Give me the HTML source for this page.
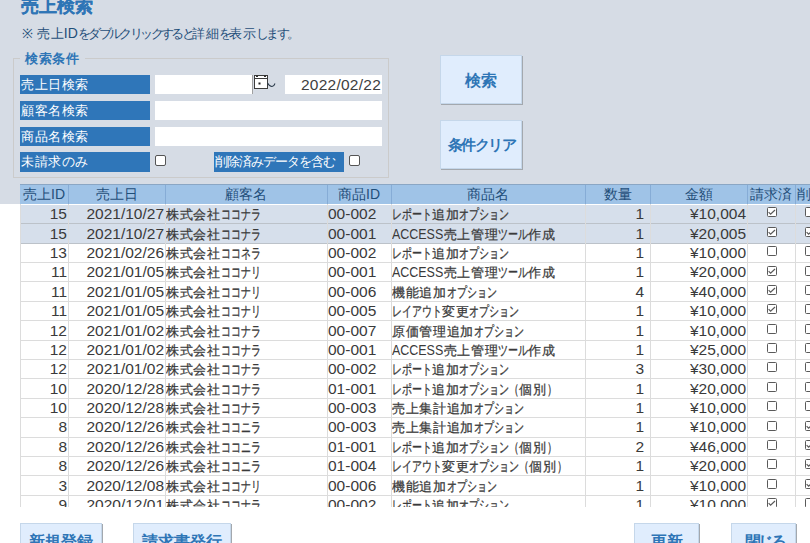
<!DOCTYPE html>
<html><head><meta charset="utf-8">
<style>
*{margin:0;padding:0;box-sizing:border-box}
html,body{width:810px;height:543px;overflow:hidden;background:#fff}
body{position:relative;font-family:"Liberation Sans",sans-serif;color:#404040}
.hdr{position:absolute;left:0;top:0;width:810px;height:204px;background:#D6DCE5}
.title{position:absolute;left:21px;top:-6px;font-size:18px;font-weight:bold;color:#2E75B6;white-space:nowrap;-webkit-text-stroke:0.12px #2E75B6}
.sub{position:absolute;left:22px;top:24px;font-size:13px;color:#1F4E79;white-space:nowrap}
.sub .k{letter-spacing:0.3px}
.sub .kt{letter-spacing:-2.6px}
.sub .l{font-size:14px}
.grp{position:absolute;left:13px;top:58px;width:376px;height:120px;border:1px solid #cbcbcb}
.legend{position:absolute;left:20px;top:50px;padding:0 6px 0 5px;background:#D6DCE5;font-size:13px;letter-spacing:0.5px;font-weight:bold;color:#2E75B6;white-space:nowrap}
.lbl{position:absolute;height:20px;background:#2F76B9;color:#fff;font-size:13px;letter-spacing:0.6px;line-height:20px;padding-left:1px;white-space:nowrap;overflow:hidden}
.tb{position:absolute;height:20px;background:#fff}
.cbx{position:absolute;width:11px;height:11px;border:1px solid #555;border-radius:2px;background:#fff}
.btn{position:absolute;background:#E0EDFD;color:#2E75B6;font-weight:bold;font-size:14px;text-align:center;white-space:nowrap;
  border:1px solid #c5d7ea;box-shadow:1px 1px 0 #a3a8ae}
.bb{height:40px;line-height:36px;font-size:15.5px}
.dsh{position:absolute;left:20px;width:790px;background:#9FC3E7;border-top:1px solid #8aa6c4}
.hc{position:absolute;top:184px;height:20px;line-height:20px;text-align:center;font-size:14px;color:#1F4E79;white-space:nowrap;overflow:hidden}
.row{position:absolute;left:20px;width:790px;height:19.39px;border-bottom:1px solid #dcdcdc;background:#fff}
.row.sel{background:#D6DFEB;border-bottom-color:#bcc2c9}
.c{position:absolute;height:19.39px;line-height:19px;font-size:15.5px;white-space:nowrap;overflow:hidden;padding:0 1px 0 1px;color:#3a3a3a}
.c.r{text-align:right}
.c.q{padding-right:6px}
.c .k{font-size:13px;letter-spacing:0.7px;-webkit-text-stroke:0.25px #3a3a3a}
.c .kt{display:inline-block;font-size:14px;white-space:nowrap}
.c .kt span{display:inline-block;transform:scaleX(0.714);transform-origin:0 50%;-webkit-text-stroke:0.3px #3a3a3a}
.c .l{font-size:12.5px}
.c .l2{display:inline-block;font-size:14px;white-space:nowrap}
.c .l2 span{display:inline-block;transform:scaleX(0.89);transform-origin:0 50%}
.vl{position:absolute;top:204px;height:303px;width:1px;background:#dcdcdc}
.vlh{position:absolute;top:185px;height:19px;width:1px;background:#86acd6}
.ds{position:absolute;left:0;top:0;width:810px;height:507px;overflow:hidden}
.cb{position:absolute;width:10px;height:10px;border:1px solid #5a5a5a;border-radius:1.5px;background:#fff}
.cb svg{position:absolute;left:-1px;top:-1px}
.ln{position:absolute;left:20px;top:204px;width:1px;height:303px;background:#dcdcdc}
</style></head><body>
<div class="hdr"></div>
<div class="title">売上検索</div>
<div class="sub"><span class="k">※</span><span class="l"> </span><span class="k">売上</span><span class="l">ID</span><span class="kt">をダブルクリックすると</span><span class="k">詳細</span><span class="kt">を</span><span class="k">表示</span><span class="kt">します。</span></div>
<div class="grp"></div>
<div class="legend">検索条件</div>

<div class="lbl" style="left:20px;top:75px;width:130px;height:19px">売上日検索</div>
<div class="lbl" style="left:20px;top:101px;width:130px;height:19px">顧客名検索</div>
<div class="lbl" style="left:20px;top:127px;width:130px;height:19px">商品名検索</div>
<div class="lbl" style="left:20px;top:152px;width:130px">未請求のみ</div>
<div class="lbl" style="left:214px;top:152px;width:130px;letter-spacing:-1px">削除済みデータを含む</div>

<div class="tb" style="left:155px;top:75px;width:98px;height:19px;border-right:1px solid #a0a0a0"></div>
<div class="tb" style="left:285px;top:75px;width:97px;height:19px;font-size:15.5px;letter-spacing:0.25px;line-height:20px;text-align:right;padding-right:1px;color:#404040">2022/02/22</div>
<div class="tb" style="left:155px;top:101px;width:227px;height:19px"></div>
<div class="tb" style="left:155px;top:127px;width:227px;height:19px"></div>
<svg style="position:absolute;left:254px;top:75px" width="22" height="15" viewBox="0 0 22 15">
 <rect x="0.5" y="0.5" width="13" height="13" fill="#fff" stroke="#3c3c3c" stroke-width="1"/>
 <line x1="0.5" y1="3.5" x2="13.5" y2="3.5" stroke="#3c3c3c"/>
 <rect x="2" y="0" width="2" height="2" fill="#333"/>
 <rect x="10" y="0" width="2" height="2" fill="#333"/>
 <rect x="4.5" y="7.5" width="2" height="2" fill="#222"/>
 <path d="M13.5 8 Q15.5 11.5 18 11.5 Q20 11.3 21 8.5" fill="none" stroke="#2b3a4a" stroke-width="1.1"/>
</svg>
<div class="cbx" style="left:155px;top:155px"></div>
<div class="cbx" style="left:349px;top:155px"></div>

<div class="btn" style="left:440px;top:55px;width:82px;height:49px;line-height:49px;font-size:15.5px">検索</div>
<div class="btn" style="left:440px;top:120px;width:82px;height:49px;line-height:47px;font-size:15px;letter-spacing:-1.6px;padding-left:1px">条件クリア</div>

<div class="ds">
<div class="dsh" style="top:184px;height:20px"></div>
<div class="hc" style="left:20.0px;width:48.0px">売上ID</div>
<div class="hc" style="left:68.0px;width:97.0px">売上日</div>
<div class="hc" style="left:165.0px;width:162.0px">顧客名</div>
<div class="hc" style="left:327.0px;width:64.0px">商品ID</div>
<div class="hc" style="left:391.0px;width:194.0px">商品名</div>
<div class="hc" style="left:585.0px;width:65.0px">数量</div>
<div class="hc" style="left:650.0px;width:97.0px">金額</div>
<div class="hc" style="left:747.0px;width:48.0px">請求済</div>
<div class="hc" style="left:795.0px;width:65.0px;text-align:left;padding-left:2px">削除済</div>
<div class="row sel" style="top:204.90px"></div>
<div class="c r" style="left:20.0px;width:48.0px;top:204.20px">15</div>
<div class="c r" style="left:68.0px;width:97.0px;top:204.20px">2021/10/27</div>
<div class="c jc" style="left:165.0px;width:162.0px;top:204.20px"><span class="k">株式会社</span><span class="kt" style="width:40.0px"><span>ココナラ</span></span></div>
<div class="c" style="left:327.0px;width:64.0px;top:204.20px">00-002</div>
<div class="c jc" style="left:391.0px;width:194.0px;top:204.20px"><span class="kt" style="width:40.0px"><span>レポート</span></span><span class="k">追加</span><span class="kt" style="width:50.0px"><span>オプション</span></span></div>
<div class="c r q" style="left:585.0px;width:65.0px;top:204.20px">1</div>
<div class="c r" style="left:650.0px;width:97.0px;top:204.20px">¥10,004</div>
<div class="cb" style="left:767.0px;top:207.3px"><svg width="10" height="10" viewBox="0 0 10 10"><path d="M1.6 5.2 L3.6 7.2 L8 3" fill="none" stroke="#5a5a5a" stroke-width="1.2"/></svg></div>
<div class="cb" style="left:805.0px;top:207.3px"></div>
<div class="row sel" style="top:224.29px"></div>
<div class="c r" style="left:20.0px;width:48.0px;top:223.59px">15</div>
<div class="c r" style="left:68.0px;width:97.0px;top:223.59px">2021/10/27</div>
<div class="c jc" style="left:165.0px;width:162.0px;top:223.59px"><span class="k">株式会社</span><span class="kt" style="width:40.0px"><span>ココナラ</span></span></div>
<div class="c" style="left:327.0px;width:64.0px;top:223.59px">00-001</div>
<div class="c jc" style="left:391.0px;width:194.0px;top:223.59px"><span class="l2" style="width:51.5px"><span>ACCESS</span></span><span class="k">売上管理</span><span class="kt" style="width:30.0px"><span>ツール</span></span><span class="k">作成</span></div>
<div class="c r q" style="left:585.0px;width:65.0px;top:223.59px">1</div>
<div class="c r" style="left:650.0px;width:97.0px;top:223.59px">¥20,005</div>
<div class="cb" style="left:767.0px;top:226.7px"><svg width="10" height="10" viewBox="0 0 10 10"><path d="M1.6 5.2 L3.6 7.2 L8 3" fill="none" stroke="#5a5a5a" stroke-width="1.2"/></svg></div>
<div class="cb" style="left:805.0px;top:226.7px"><svg width="10" height="10" viewBox="0 0 10 10"><path d="M1.6 5.2 L3.6 7.2 L8 3" fill="none" stroke="#5a5a5a" stroke-width="1.2"/></svg></div>
<div class="row" style="top:243.68px"></div>
<div class="c r" style="left:20.0px;width:48.0px;top:242.98px">13</div>
<div class="c r" style="left:68.0px;width:97.0px;top:242.98px">2021/02/26</div>
<div class="c jc" style="left:165.0px;width:162.0px;top:242.98px"><span class="k">株式会社</span><span class="kt" style="width:40.0px"><span>ココネラ</span></span></div>
<div class="c" style="left:327.0px;width:64.0px;top:242.98px">00-002</div>
<div class="c jc" style="left:391.0px;width:194.0px;top:242.98px"><span class="kt" style="width:40.0px"><span>レポート</span></span><span class="k">追加</span><span class="kt" style="width:50.0px"><span>オプション</span></span></div>
<div class="c r q" style="left:585.0px;width:65.0px;top:242.98px">1</div>
<div class="c r" style="left:650.0px;width:97.0px;top:242.98px">¥10,000</div>
<div class="cb" style="left:767.0px;top:246.1px"></div>
<div class="cb" style="left:805.0px;top:246.1px"></div>
<div class="row" style="top:263.07px"></div>
<div class="c r" style="left:20.0px;width:48.0px;top:262.37px">11</div>
<div class="c r" style="left:68.0px;width:97.0px;top:262.37px">2021/01/05</div>
<div class="c jc" style="left:165.0px;width:162.0px;top:262.37px"><span class="k">株式会社</span><span class="kt" style="width:40.0px"><span>ココナリ</span></span></div>
<div class="c" style="left:327.0px;width:64.0px;top:262.37px">00-001</div>
<div class="c jc" style="left:391.0px;width:194.0px;top:262.37px"><span class="l2" style="width:51.5px"><span>ACCESS</span></span><span class="k">売上管理</span><span class="kt" style="width:30.0px"><span>ツール</span></span><span class="k">作成</span></div>
<div class="c r q" style="left:585.0px;width:65.0px;top:262.37px">1</div>
<div class="c r" style="left:650.0px;width:97.0px;top:262.37px">¥20,000</div>
<div class="cb" style="left:767.0px;top:265.5px"><svg width="10" height="10" viewBox="0 0 10 10"><path d="M1.6 5.2 L3.6 7.2 L8 3" fill="none" stroke="#5a5a5a" stroke-width="1.2"/></svg></div>
<div class="cb" style="left:805.0px;top:265.5px"></div>
<div class="row" style="top:282.46px"></div>
<div class="c r" style="left:20.0px;width:48.0px;top:281.76px">11</div>
<div class="c r" style="left:68.0px;width:97.0px;top:281.76px">2021/01/05</div>
<div class="c jc" style="left:165.0px;width:162.0px;top:281.76px"><span class="k">株式会社</span><span class="kt" style="width:40.0px"><span>ココナリ</span></span></div>
<div class="c" style="left:327.0px;width:64.0px;top:281.76px">00-006</div>
<div class="c jc" style="left:391.0px;width:194.0px;top:281.76px"><span class="k">機能追加</span><span class="kt" style="width:50.0px"><span>オプション</span></span></div>
<div class="c r q" style="left:585.0px;width:65.0px;top:281.76px">4</div>
<div class="c r" style="left:650.0px;width:97.0px;top:281.76px">¥40,000</div>
<div class="cb" style="left:767.0px;top:284.9px"><svg width="10" height="10" viewBox="0 0 10 10"><path d="M1.6 5.2 L3.6 7.2 L8 3" fill="none" stroke="#5a5a5a" stroke-width="1.2"/></svg></div>
<div class="cb" style="left:805.0px;top:284.9px"></div>
<div class="row" style="top:301.85px"></div>
<div class="c r" style="left:20.0px;width:48.0px;top:301.15px">11</div>
<div class="c r" style="left:68.0px;width:97.0px;top:301.15px">2021/01/05</div>
<div class="c jc" style="left:165.0px;width:162.0px;top:301.15px"><span class="k">株式会社</span><span class="kt" style="width:40.0px"><span>ココナリ</span></span></div>
<div class="c" style="left:327.0px;width:64.0px;top:301.15px">00-005</div>
<div class="c jc" style="left:391.0px;width:194.0px;top:301.15px"><span class="kt" style="width:50.0px"><span>レイアウト</span></span><span class="k">変更</span><span class="kt" style="width:50.0px"><span>オプション</span></span></div>
<div class="c r q" style="left:585.0px;width:65.0px;top:301.15px">1</div>
<div class="c r" style="left:650.0px;width:97.0px;top:301.15px">¥10,000</div>
<div class="cb" style="left:767.0px;top:304.2px"><svg width="10" height="10" viewBox="0 0 10 10"><path d="M1.6 5.2 L3.6 7.2 L8 3" fill="none" stroke="#5a5a5a" stroke-width="1.2"/></svg></div>
<div class="cb" style="left:805.0px;top:304.2px"></div>
<div class="row" style="top:321.24px"></div>
<div class="c r" style="left:20.0px;width:48.0px;top:320.54px">12</div>
<div class="c r" style="left:68.0px;width:97.0px;top:320.54px">2021/01/02</div>
<div class="c jc" style="left:165.0px;width:162.0px;top:320.54px"><span class="k">株式会社</span><span class="kt" style="width:40.0px"><span>ココナラ</span></span></div>
<div class="c" style="left:327.0px;width:64.0px;top:320.54px">00-007</div>
<div class="c jc" style="left:391.0px;width:194.0px;top:320.54px"><span class="k">原価管理追加</span><span class="kt" style="width:50.0px"><span>オプション</span></span></div>
<div class="c r q" style="left:585.0px;width:65.0px;top:320.54px">1</div>
<div class="c r" style="left:650.0px;width:97.0px;top:320.54px">¥10,000</div>
<div class="cb" style="left:767.0px;top:323.6px"></div>
<div class="cb" style="left:805.0px;top:323.6px"></div>
<div class="row" style="top:340.63px"></div>
<div class="c r" style="left:20.0px;width:48.0px;top:339.93px">12</div>
<div class="c r" style="left:68.0px;width:97.0px;top:339.93px">2021/01/02</div>
<div class="c jc" style="left:165.0px;width:162.0px;top:339.93px"><span class="k">株式会社</span><span class="kt" style="width:40.0px"><span>ココナラ</span></span></div>
<div class="c" style="left:327.0px;width:64.0px;top:339.93px">00-001</div>
<div class="c jc" style="left:391.0px;width:194.0px;top:339.93px"><span class="l2" style="width:51.5px"><span>ACCESS</span></span><span class="k">売上管理</span><span class="kt" style="width:30.0px"><span>ツール</span></span><span class="k">作成</span></div>
<div class="c r q" style="left:585.0px;width:65.0px;top:339.93px">1</div>
<div class="c r" style="left:650.0px;width:97.0px;top:339.93px">¥25,000</div>
<div class="cb" style="left:767.0px;top:343.0px"></div>
<div class="cb" style="left:805.0px;top:343.0px"></div>
<div class="row" style="top:360.02px"></div>
<div class="c r" style="left:20.0px;width:48.0px;top:359.32px">12</div>
<div class="c r" style="left:68.0px;width:97.0px;top:359.32px">2021/01/02</div>
<div class="c jc" style="left:165.0px;width:162.0px;top:359.32px"><span class="k">株式会社</span><span class="kt" style="width:40.0px"><span>ココナラ</span></span></div>
<div class="c" style="left:327.0px;width:64.0px;top:359.32px">00-002</div>
<div class="c jc" style="left:391.0px;width:194.0px;top:359.32px"><span class="kt" style="width:40.0px"><span>レポート</span></span><span class="k">追加</span><span class="kt" style="width:50.0px"><span>オプション</span></span></div>
<div class="c r q" style="left:585.0px;width:65.0px;top:359.32px">3</div>
<div class="c r" style="left:650.0px;width:97.0px;top:359.32px">¥30,000</div>
<div class="cb" style="left:767.0px;top:362.4px"></div>
<div class="cb" style="left:805.0px;top:362.4px"></div>
<div class="row" style="top:379.41px"></div>
<div class="c r" style="left:20.0px;width:48.0px;top:378.71px">10</div>
<div class="c r" style="left:68.0px;width:97.0px;top:378.71px">2020/12/28</div>
<div class="c jc" style="left:165.0px;width:162.0px;top:378.71px"><span class="k">株式会社</span><span class="kt" style="width:40.0px"><span>ココナラ</span></span></div>
<div class="c" style="left:327.0px;width:64.0px;top:378.71px">01-001</div>
<div class="c jc" style="left:391.0px;width:194.0px;top:378.71px"><span class="kt" style="width:40.0px"><span>レポート</span></span><span class="k">追加</span><span class="kt" style="width:60.0px"><span>オプション（</span></span><span class="k">個別</span><span class="kt" style="width:10.0px"><span>）</span></span></div>
<div class="c r q" style="left:585.0px;width:65.0px;top:378.71px">1</div>
<div class="c r" style="left:650.0px;width:97.0px;top:378.71px">¥20,000</div>
<div class="cb" style="left:767.0px;top:381.8px"></div>
<div class="cb" style="left:805.0px;top:381.8px"></div>
<div class="row" style="top:398.80px"></div>
<div class="c r" style="left:20.0px;width:48.0px;top:398.10px">10</div>
<div class="c r" style="left:68.0px;width:97.0px;top:398.10px">2020/12/28</div>
<div class="c jc" style="left:165.0px;width:162.0px;top:398.10px"><span class="k">株式会社</span><span class="kt" style="width:40.0px"><span>ココナラ</span></span></div>
<div class="c" style="left:327.0px;width:64.0px;top:398.10px">00-003</div>
<div class="c jc" style="left:391.0px;width:194.0px;top:398.10px"><span class="k">売上集計追加</span><span class="kt" style="width:50.0px"><span>オプション</span></span></div>
<div class="c r q" style="left:585.0px;width:65.0px;top:398.10px">1</div>
<div class="c r" style="left:650.0px;width:97.0px;top:398.10px">¥10,000</div>
<div class="cb" style="left:767.0px;top:401.2px"></div>
<div class="cb" style="left:805.0px;top:401.2px"></div>
<div class="row" style="top:418.19px"></div>
<div class="c r" style="left:20.0px;width:48.0px;top:417.49px">8</div>
<div class="c r" style="left:68.0px;width:97.0px;top:417.49px">2020/12/26</div>
<div class="c jc" style="left:165.0px;width:162.0px;top:417.49px"><span class="k">株式会社</span><span class="kt" style="width:40.0px"><span>ココニラ</span></span></div>
<div class="c" style="left:327.0px;width:64.0px;top:417.49px">00-003</div>
<div class="c jc" style="left:391.0px;width:194.0px;top:417.49px"><span class="k">売上集計追加</span><span class="kt" style="width:50.0px"><span>オプション</span></span></div>
<div class="c r q" style="left:585.0px;width:65.0px;top:417.49px">1</div>
<div class="c r" style="left:650.0px;width:97.0px;top:417.49px">¥10,000</div>
<div class="cb" style="left:767.0px;top:420.6px"></div>
<div class="cb" style="left:805.0px;top:420.6px"><svg width="10" height="10" viewBox="0 0 10 10"><path d="M1.6 5.2 L3.6 7.2 L8 3" fill="none" stroke="#5a5a5a" stroke-width="1.2"/></svg></div>
<div class="row" style="top:437.58px"></div>
<div class="c r" style="left:20.0px;width:48.0px;top:436.88px">8</div>
<div class="c r" style="left:68.0px;width:97.0px;top:436.88px">2020/12/26</div>
<div class="c jc" style="left:165.0px;width:162.0px;top:436.88px"><span class="k">株式会社</span><span class="kt" style="width:40.0px"><span>ココニラ</span></span></div>
<div class="c" style="left:327.0px;width:64.0px;top:436.88px">01-001</div>
<div class="c jc" style="left:391.0px;width:194.0px;top:436.88px"><span class="kt" style="width:40.0px"><span>レポート</span></span><span class="k">追加</span><span class="kt" style="width:60.0px"><span>オプション（</span></span><span class="k">個別</span><span class="kt" style="width:10.0px"><span>）</span></span></div>
<div class="c r q" style="left:585.0px;width:65.0px;top:436.88px">2</div>
<div class="c r" style="left:650.0px;width:97.0px;top:436.88px">¥46,000</div>
<div class="cb" style="left:767.0px;top:440.0px"></div>
<div class="cb" style="left:805.0px;top:440.0px"><svg width="10" height="10" viewBox="0 0 10 10"><path d="M1.6 5.2 L3.6 7.2 L8 3" fill="none" stroke="#5a5a5a" stroke-width="1.2"/></svg></div>
<div class="row" style="top:456.97px"></div>
<div class="c r" style="left:20.0px;width:48.0px;top:456.27px">8</div>
<div class="c r" style="left:68.0px;width:97.0px;top:456.27px">2020/12/26</div>
<div class="c jc" style="left:165.0px;width:162.0px;top:456.27px"><span class="k">株式会社</span><span class="kt" style="width:40.0px"><span>ココニラ</span></span></div>
<div class="c" style="left:327.0px;width:64.0px;top:456.27px">01-004</div>
<div class="c jc" style="left:391.0px;width:194.0px;top:456.27px"><span class="kt" style="width:50.0px"><span>レイアウト</span></span><span class="k">変更</span><span class="kt" style="width:60.0px"><span>オプション（</span></span><span class="k">個別</span><span class="kt" style="width:10.0px"><span>）</span></span></div>
<div class="c r q" style="left:585.0px;width:65.0px;top:456.27px">1</div>
<div class="c r" style="left:650.0px;width:97.0px;top:456.27px">¥20,000</div>
<div class="cb" style="left:767.0px;top:459.4px"></div>
<div class="cb" style="left:805.0px;top:459.4px"><svg width="10" height="10" viewBox="0 0 10 10"><path d="M1.6 5.2 L3.6 7.2 L8 3" fill="none" stroke="#5a5a5a" stroke-width="1.2"/></svg></div>
<div class="row" style="top:476.36px"></div>
<div class="c r" style="left:20.0px;width:48.0px;top:475.66px">3</div>
<div class="c r" style="left:68.0px;width:97.0px;top:475.66px">2020/12/08</div>
<div class="c jc" style="left:165.0px;width:162.0px;top:475.66px"><span class="k">株式会社</span><span class="kt" style="width:40.0px"><span>ココナリ</span></span></div>
<div class="c" style="left:327.0px;width:64.0px;top:475.66px">00-006</div>
<div class="c jc" style="left:391.0px;width:194.0px;top:475.66px"><span class="k">機能追加</span><span class="kt" style="width:50.0px"><span>オプション</span></span></div>
<div class="c r q" style="left:585.0px;width:65.0px;top:475.66px">1</div>
<div class="c r" style="left:650.0px;width:97.0px;top:475.66px">¥10,000</div>
<div class="cb" style="left:767.0px;top:478.8px"></div>
<div class="cb" style="left:805.0px;top:478.8px"><svg width="10" height="10" viewBox="0 0 10 10"><path d="M1.6 5.2 L3.6 7.2 L8 3" fill="none" stroke="#5a5a5a" stroke-width="1.2"/></svg></div>
<div class="row" style="top:495.75px"></div>
<div class="c r" style="left:20.0px;width:48.0px;top:495.05px">9</div>
<div class="c r" style="left:68.0px;width:97.0px;top:495.05px">2020/12/01</div>
<div class="c jc" style="left:165.0px;width:162.0px;top:495.05px"><span class="k">株式会社</span><span class="kt" style="width:40.0px"><span>ココナラ</span></span></div>
<div class="c" style="left:327.0px;width:64.0px;top:495.05px">00-002</div>
<div class="c jc" style="left:391.0px;width:194.0px;top:495.05px"><span class="kt" style="width:40.0px"><span>レポート</span></span><span class="k">追加</span><span class="kt" style="width:50.0px"><span>オプション</span></span></div>
<div class="c r q" style="left:585.0px;width:65.0px;top:495.05px">1</div>
<div class="c r" style="left:650.0px;width:97.0px;top:495.05px">¥10,000</div>
<div class="cb" style="left:767.0px;top:498.1px"><svg width="10" height="10" viewBox="0 0 10 10"><path d="M1.6 5.2 L3.6 7.2 L8 3" fill="none" stroke="#5a5a5a" stroke-width="1.2"/></svg></div>
<div class="cb" style="left:805.0px;top:498.1px"></div>
<div class="vl" style="left:68.0px"></div>
<div class="vlh" style="left:68.0px"></div>
<div class="vl" style="left:165.0px"></div>
<div class="vlh" style="left:165.0px"></div>
<div class="vl" style="left:327.0px"></div>
<div class="vlh" style="left:327.0px"></div>
<div class="vl" style="left:391.0px"></div>
<div class="vlh" style="left:391.0px"></div>
<div class="vl" style="left:585.0px"></div>
<div class="vlh" style="left:585.0px"></div>
<div class="vl" style="left:650.0px"></div>
<div class="vlh" style="left:650.0px"></div>
<div class="vl" style="left:747.0px"></div>
<div class="vlh" style="left:747.0px"></div>
<div class="vl" style="left:795.0px"></div>
<div class="vlh" style="left:795.0px"></div>
<div class="ln"></div>
</div>

<div class="btn bb" style="left:20px;top:523px;width:82px">新規登録</div>
<div class="btn bb" style="left:133px;top:523px;width:98px">請求書発行</div>
<div class="btn bb" style="left:634px;top:523px;width:65px">更新</div>
<div class="btn bb" style="left:731px;top:523px;width:65px;letter-spacing:-3px;padding-left:2px">閉じる</div>
</body></html>
